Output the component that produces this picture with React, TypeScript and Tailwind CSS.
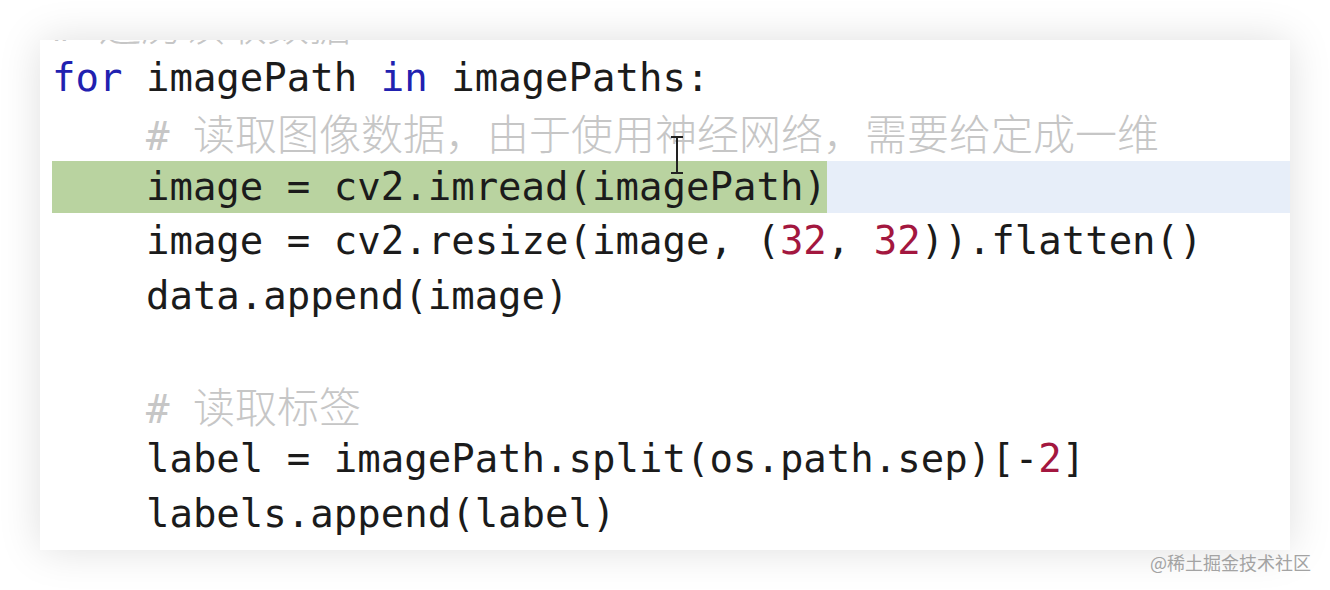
import React from "react";

const mono = "font-['DejaVu_Sans_Mono','Noto_Sans_CJK_SC',monospace]";
const cjk = "text-[42px] font-['Noto_Sans_CJK_SC',sans-serif] font-light";
const row = "h-[54.5px] pl-[12px]";

const Kw: React.FC<{ children: React.ReactNode }> = ({ children }) => (
  <span className="text-[#2121b0]">{children}</span>
);

const Num: React.FC<{ children: React.ReactNode }> = ({ children }) => (
  <span className="text-[#a3173f]">{children}</span>
);

const Comment: React.FC<{ text: string }> = ({ text }) => (
  <span className="text-[#c6c6c6]">
    # <span className={cjk}>{text}</span>
  </span>
);

const App: React.FC = () => {
  return (
    <div className="relative w-[1330px] h-[590px] bg-white pt-[40px] pl-[40px]">
      <div className="w-[1250px] h-[510px] bg-white overflow-hidden shadow-[0_0_40px_rgba(0,0,0,0.13)]">
        <div
          className={`relative -mt-[44px] flex flex-col text-[39px] leading-[54.5px] text-[#1b1b1b] whitespace-pre ${mono}`}
        >
          <div className={row}>
            <Comment text="遍历读取数据" />
          </div>
          <div className={row}>
            <Kw>for</Kw> imagePath <Kw>in</Kw> imagePaths:
          </div>
          <div className={row}>
            {"    "}
            <Comment text="读取图像数据，由于使用神经网络，需要给定成一维" />
          </div>
          <div className="h-[54.5px] ml-[12px] py-[1.5px] flex">
            <span className="bg-[#b9d3a0] leading-[51.5px]">{"    "}image = cv2.imread(imagePath)</span>
            <span className="flex-1 bg-[#e7eef9]" />
          </div>
          <div className={row}>
            {"    "}image = cv2.resize(image, (<Num>32</Num>, <Num>32</Num>)).flatten()
          </div>
          <div className={row}>{"    "}data.append(image)</div>
          <div className={row}>&nbsp;</div>
          <div className={row}>
            {"    "}
            <Comment text="读取标签" />
          </div>
          <div className={row}>
            {"    "}label = imagePath.split(os.path.sep)[-<Num>2</Num>]
          </div>
          <div className={row}>{"    "}labels.append(label)</div>

          {/* text cursor */}
          <svg
            className="absolute left-[630px] top-[140px]"
            width="14"
            height="38"
            viewBox="0 0 14 38"
          >
            <path d="M1 1h12M7 1v36M1 37h12" stroke="#222" strokeWidth="2" fill="none" />
          </svg>
        </div>
      </div>
      <div className="absolute left-[1150px] top-[550px] text-[18px] leading-[24px] text-[#a3a3a3] font-['Noto_Sans_CJK_SC',sans-serif]">
        @稀土掘金技术社区
      </div>
    </div>
  );
};

export default App;
